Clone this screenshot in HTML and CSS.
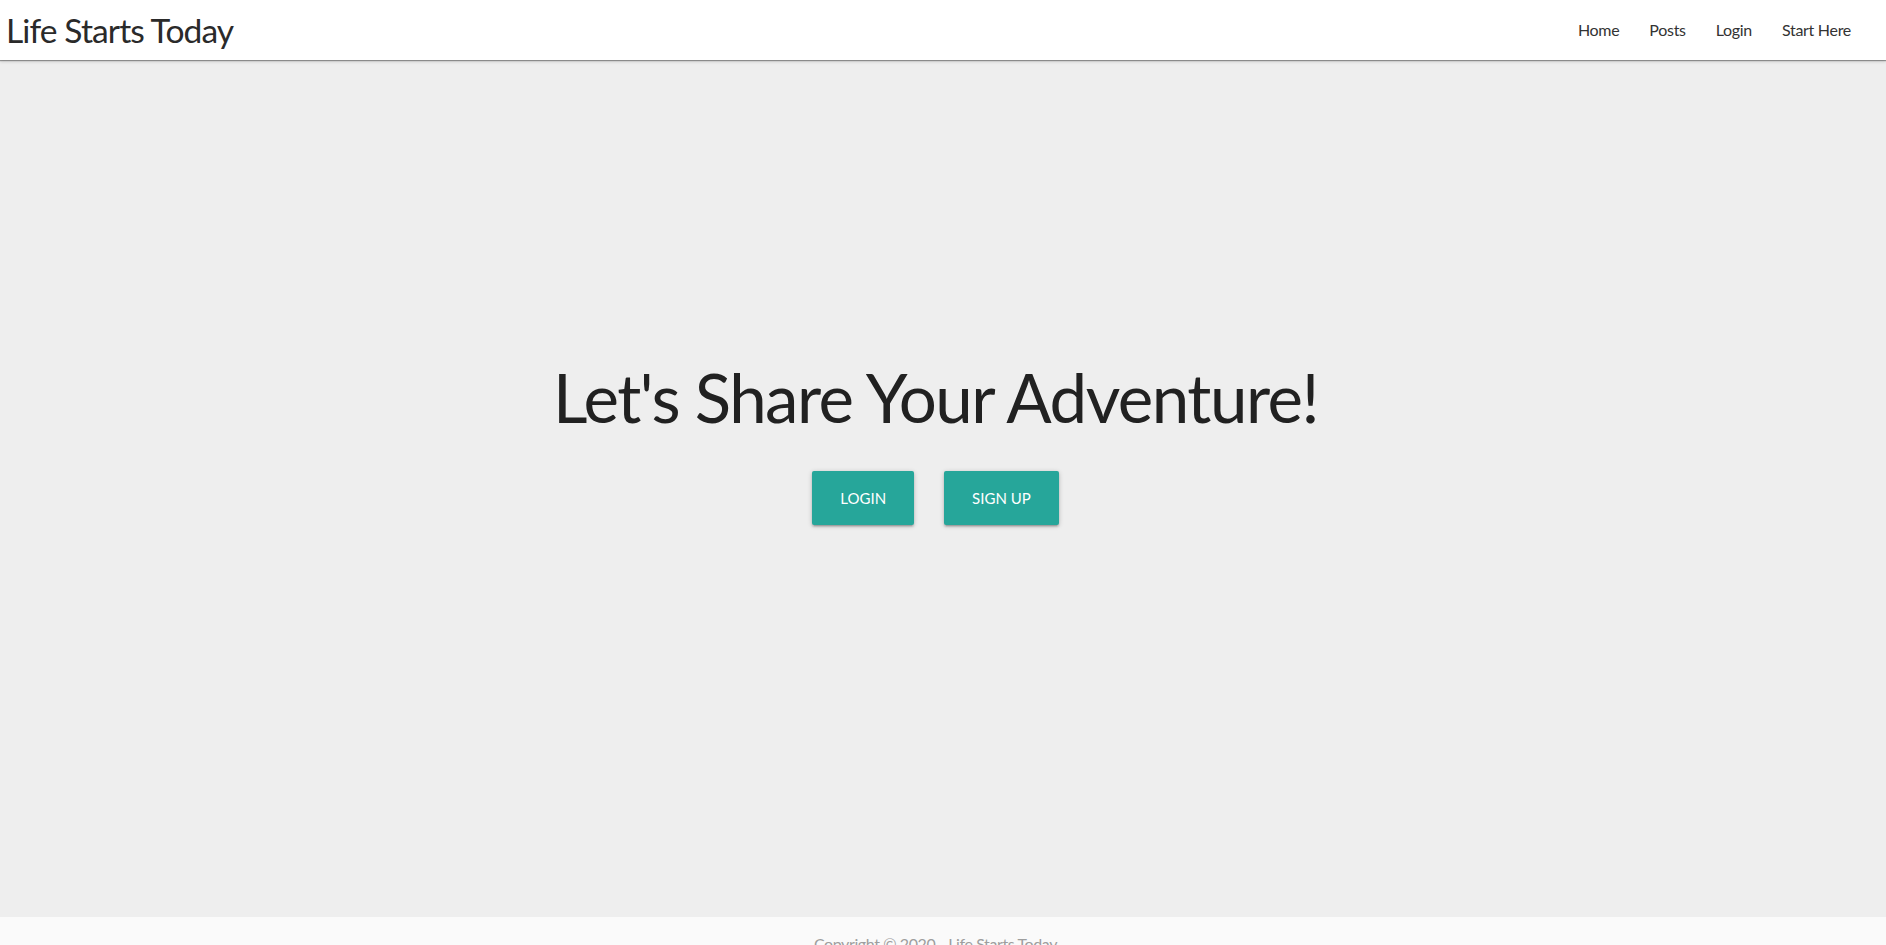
FILE: index.html
```html
<!DOCTYPE html>
<html lang="en">
<head>
<meta charset="utf-8">
<title>Life Starts Today</title>
<link rel="stylesheet" href="styles.css">
</head>
<body>
<nav class="navbar">
  <a class="brand" href="#">Life Starts Today</a>
  <ul class="nav-links">
    <li><a href="#">Home</a></li>
    <li><a href="#">Posts</a></li>
    <li><a href="#">Login</a></li>
    <li><a href="#">Start Here</a></li>
  </ul>
</nav>
<main class="hero">
  <h1 class="hero-title">Let's Share Your Adventure!</h1>
  <div class="hero-actions">
    <a class="btn" href="#">LOGIN</a>
    <a class="btn" href="#">SIGN UP</a>
  </div>
</main>
<footer class="footer">
  <p class="copyright">Copyright © 2020 - Life Starts Today</p>
</footer>
</body>
</html>
```

FILE: styles.css
```css
* { box-sizing: border-box; }
html, body { margin: 0; padding: 0; }
body {
  font-family: Lato, "Open Sans", sans-serif;
  color: rgba(0,0,0,0.87);
  background: #eeeeee;
}
a { text-decoration: none; }

.navbar {
  position: relative;
  z-index: 2;
  height: 60px;
  background: #ffffff;
  display: flex;
  align-items: center;
  justify-content: space-between;
  padding: 0 20px 0 6px;
  box-shadow: 0 1px 1px rgba(0,0,0,0.35), 0 2px 3px rgba(0,0,0,0.12);
}
.brand {
  font-size: 33.6px;
  letter-spacing: -0.9px;
  color: #2a2a2a;
  line-height: 60px;
}
.nav-links {
  list-style: none;
  margin: 0;
  padding: 0;
  display: flex;
}
.nav-links a {
  display: block;
  padding: 0 15px;
  font-size: 16px;
  letter-spacing: -0.3px;
  line-height: 58px;
  color: #333333;
}

.hero {
  height: 857px;
  display: flex;
  flex-direction: column;
  align-items: center;
  justify-content: center;
  padding: 0 15px 92px 0;
}
.hero-title {
  font-size: 67.2px;
  line-height: 74px;
  letter-spacing: -1.5px;
  font-weight: 400;
  margin: 0 0 37px;
  color: #212121;
}
.hero-actions {
  display: flex;
  gap: 30px;
}
.btn {
  display: inline-block;
  height: 54px;
  line-height: 54px;
  padding: 0 28px;
  font-size: 15px;
  color: #ffffff;
  background: #26a69a;
  border-radius: 2px;
  box-shadow: 0 2px 2px 0 rgba(0,0,0,0.14), 0 3px 1px -2px rgba(0,0,0,0.12), 0 1px 5px 0 rgba(0,0,0,0.2);
}

.footer {
  background: #fafafa;
  padding: 15px 15px 20px 0;
}
.copyright {
  margin: 0;
  text-align: center;
  font-size: 16px;
  letter-spacing: -0.4px;
  line-height: 24px;
  color: #9e9e9e;
}
```
